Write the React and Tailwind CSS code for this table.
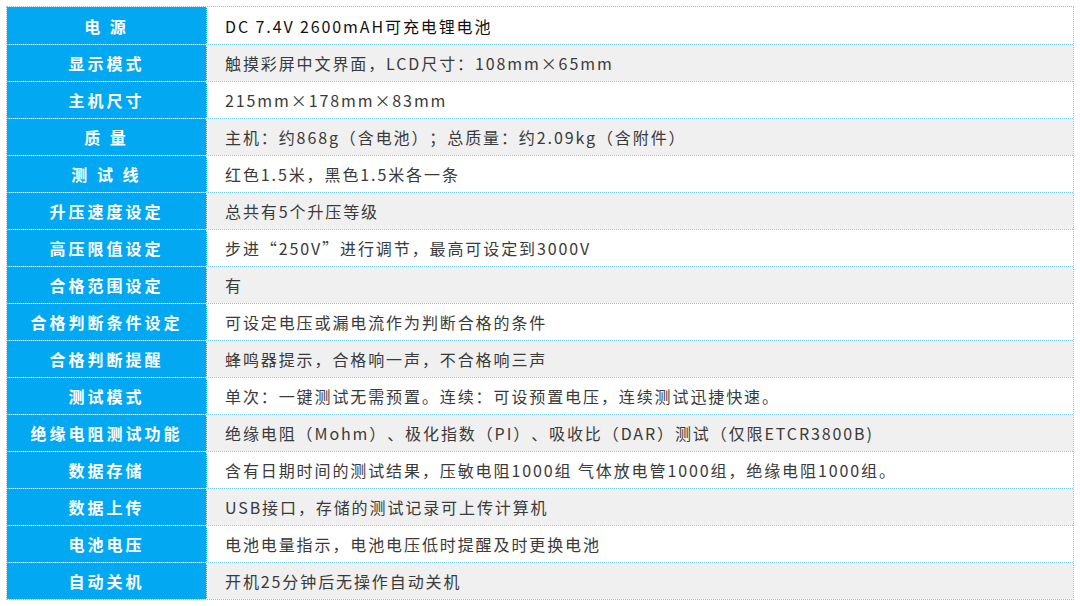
const rows = [
  ['电 源', 'DC 7.4V 2600mAH可充电锂电池'],
  ['显示模式', '触摸彩屏中文界面，LCD尺寸：108mm×65mm'],
  ['主机尺寸', '215mm×178mm×83mm'],
  ['质 量', '主机：约868g（含电池）；总质量：约2.09kg（含附件）'],
  ['测 试 线', '红色1.5米，黑色1.5米各一条'],
  ['升压速度设定', '总共有5个升压等级'],
  ['高压限值设定', '步进“250V”进行调节，最高可设定到3000V'],
  ['合格范围设定', '有'],
  ['合格判断条件设定', '可设定电压或漏电流作为判断合格的条件'],
  ['合格判断提醒', '蜂鸣器提示，合格响一声，不合格响三声'],
  ['测试模式', '单次：一键测试无需预置。连续：可设预置电压，连续测试迅捷快速。'],
  ['绝缘电阻测试功能', '绝缘电阻（Mohm）、极化指数（PI）、吸收比（DAR）测试（仅限ETCR3800B)'],
  ['数据存储', '含有日期时间的测试结果，压敏电阻1000组 气体放电管1000组，绝缘电阻1000组。'],
  ['数据上传', 'USB接口，存储的测试记录可上传计算机'],
  ['电池电压', '电池电量指示，电池电压低时提醒及时更换电池'],
  ['自动关机', '开机25分钟后无操作自动关机'],
];

export default function App() {
  return (
    <div className="w-[1080px] h-[606px] bg-white pt-[6px] pl-[6px] [text-spacing-trim:space-all]" style={{ fontFamily: '"Noto Sans CJK SC", "Noto Sans", sans-serif' }}>
      <div className="w-[1068px] border border-dotted border-[#6fd0f8]">
        {rows.map(([k, v], i) => (
          <div
            key={i}
            className={`flex h-[37px] ${i > 0 ? 'border-t border-dotted border-[#6fd0f8]' : ''} ${i % 2 ? 'bg-[#f0f0f0]' : 'bg-white'}`}
          >
            <div className="w-[200px] shrink-0 bg-[#02a9f2] border-r border-dotted border-[#cdeefc] flex items-center justify-center text-white font-bold text-[16px] tracking-[3px] whitespace-pre">
              {k}
            </div>
            <div className={`flex items-center pl-[18px] text-[16px] tracking-[1.9px] ${i === 0 ? 'text-[#111]' : 'text-[#3a3a3a]'}`}>
              {v}
            </div>
          </div>
        ))}
      </div>
    </div>
  );
}
